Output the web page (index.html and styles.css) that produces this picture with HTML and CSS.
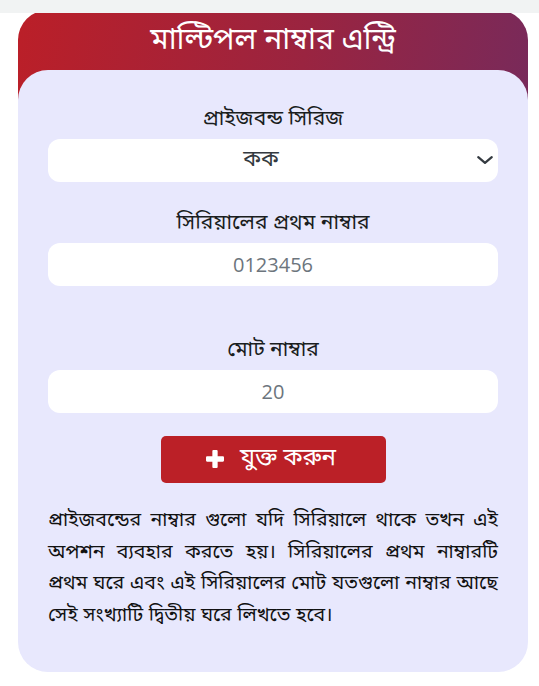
FILE: index.html
```html
<!DOCTYPE html>
<html lang="bn">
<head>
<meta charset="utf-8">
<title>মাল্টিপল নাম্বার এন্ট্রি</title>
<link rel="stylesheet" href="styles.css">
</head>
<body>
<div class="topbar"></div>
<main class="wrap">
  <section class="card">
    <h1 class="card-title">মাল্টিপল নাম্বার এন্ট্রি</h1>
    <div class="card-body">
      <form class="entry-form">
        <div class="field">
          <label class="field-label" for="series">প্রাইজবন্ড সিরিজ</label>
          <div class="select-box">
            <select id="series" class="field-control select-control">
              <option>কক</option>
            </select>
            <svg class="chevron" viewBox="0 0 16 16" aria-hidden="true"><path d="M2 5.5l6 5 6-5" fill="none" stroke="#343a40" stroke-width="2" stroke-linecap="round" stroke-linejoin="round"/></svg>
          </div>
        </div>
        <div class="field field-wide">
          <label class="field-label" for="first">সিরিয়ালের প্রথম নাম্বার</label>
          <input id="first" class="field-control" type="text" placeholder="0123456">
        </div>
        <div class="field">
          <label class="field-label" for="total">মোট নাম্বার</label>
          <input id="total" class="field-control" type="text" placeholder="20">
        </div>
        <div class="actions">
          <button type="button" class="add-btn">
            <svg class="plus" viewBox="0 0 17 17" aria-hidden="true"><path d="M6 1a1 1 0 0 1 1-1h3a1 1 0 0 1 1 1v5h5a1 1 0 0 1 1 1v3a1 1 0 0 1-1 1h-5v5a1 1 0 0 1-1 1H7a1 1 0 0 1-1-1v-5H1a1 1 0 0 1-1-1V7a1 1 0 0 1 1-1h5z" fill="#fff"/></svg>
            <span>যুক্ত করুন</span>
          </button>
        </div>
      </form>
      <p class="note">প্রাইজবন্ডের নাম্বার গুলো যদি সিরিয়ালে থাকে তখন এই অপশন ব্যবহার করতে হয়। সিরিয়ালের প্রথম নাম্বারটি প্রথম ঘরে এবং এই সিরিয়ালের মোট যতগুলো নাম্বার আছে সেই সংখ্যাটি দ্বিতীয় ঘরে লিখতে হবে।</p>
    </div>
  </section>
</main>
</body>
</html>
```
FILE: styles.css
```css
* { box-sizing: border-box; }
html, body { margin: 0; padding: 0; background: #ffffff; }
body {
  font-family: "Noto Sans Bengali", "Noto Sans", "Open Sans", sans-serif;
  color: #212529;
}
.topbar {
  position: fixed;
  top: 0; left: 0; right: 0;
  height: 13px;
  background: #f1f3f3;
  z-index: 5;
}
.wrap {
  padding: 10px 11px 14px 18px;
}
.card {
  background-image: linear-gradient(100deg, #bb1f28 0%, #9a2440 55%, #772a5b 100%);
  background-size: 100% 140px;
  background-repeat: no-repeat;
  border-radius: 30px;
}
.card-title {
  margin: 0;
  height: 60px;
  display: flex;
  align-items: center;
  justify-content: center;
  color: #ffffff;
  font-size: 30px;
  font-weight: 400;
  padding-top: 2px;
}
.card-body {
  background: #e8e8fd;
  border-radius: 30px;
  padding: 35px 30px 40px;
}
.entry-form { display: flex; flex-direction: column; }
.field { display: flex; flex-direction: column; align-items: stretch; }
.field + .field { margin-top: 27px; }
.field-wide + .field { margin-top: 50px; }
.field-label {
  text-align: center;
  font-size: 21px;
  line-height: 30px;
  color: #1a1d20;
  margin-bottom: 4px;
}
.select-box { position: relative; }
.field-control {
  width: 100%;
  height: 43px;
  border: none;
  border-radius: 12px;
  background: #ffffff;
  text-align: center;
  font-family: "Open Sans", "Noto Sans Bengali", sans-serif;
  font-size: 20px;
  color: #495057;
  outline: none;
}
.field-control::placeholder { color: #6c757d; opacity: 1; }
.select-control {
  appearance: none;
  -webkit-appearance: none;
  text-align-last: center;
  font-family: "Noto Sans Bengali", "Open Sans", sans-serif;
  font-size: 22px;
  color: #343a40;
  padding: 0 36px 0 12px;
}
.chevron {
  position: absolute;
  right: 4px;
  top: 12px;
  width: 18px;
  height: 18px;
  pointer-events: none;
}
.actions {
  display: flex;
  justify-content: center;
  margin-top: 23px;
}
.add-btn {
  width: 225px;
  height: 47px;
  border: none;
  border-radius: 5px;
  background: #bb2027;
  color: #ffffff;
  font-family: "Noto Sans Bengali", "Noto Sans", sans-serif;
  font-size: 24px;
  display: flex;
  align-items: center;
  justify-content: center;
  gap: 16px;
  padding: 0 4px 2px 0;
}
.plus { width: 18px; height: 18px; flex: none; }
.note {
  margin: 23px 0 0;
  font-size: 19.5px;
  word-spacing: 0.5px;
  line-height: 31.5px;
  text-align: justify;
  color: #111111;
}
```
